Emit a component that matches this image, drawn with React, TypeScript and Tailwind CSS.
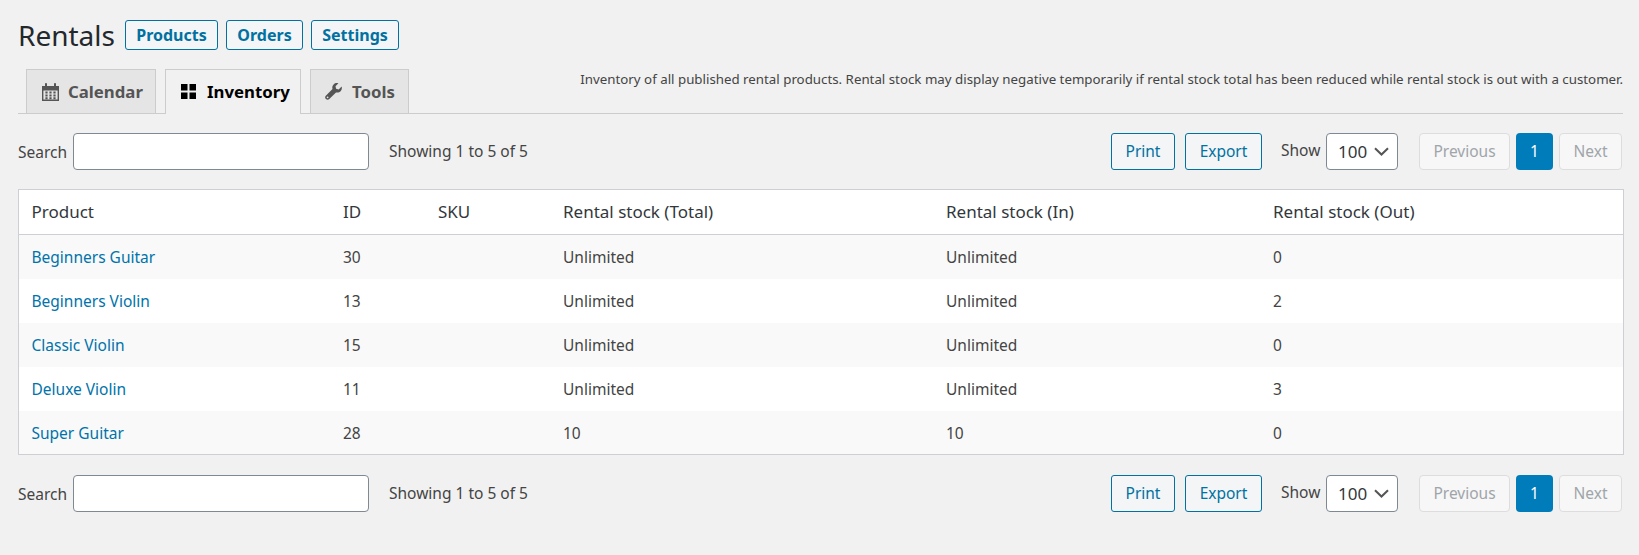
import React from "react";

const font = "font-['Noto_Sans','Open_Sans',sans-serif]";

const rows = [
  ["Beginners Guitar", "30", "", "Unlimited", "Unlimited", "0"],
  ["Beginners Violin", "13", "", "Unlimited", "Unlimited", "2"],
  ["Classic Violin", "15", "", "Unlimited", "Unlimited", "0"],
  ["Deluxe Violin", "11", "", "Unlimited", "Unlimited", "3"],
  ["Super Guitar", "28", "", "10", "10", "0"],
];

function CalendarIcon() {
  return (
    <svg width="17" height="18" viewBox="0 0 17 18" className="mr-[9px] shrink-0">
      <path fill="#555" fillRule="evenodd" d="M0 3h3V1.2C3 .5 3.4 0 4 0s1 .5 1 1.200V3h7V1.200C12 .5 12.400 0 13 0s1 .5 1 1.200V3h3v15H0V3zm1.400 4.500v9.100h14.200V7.500H1.400z" />
      <path fill="#555" d="M3.400 8.600h2.200v2H3.400zM7.400 8.600h2.200v2H7.400zM11.400 8.600h2.200v2h-2.200zM3.400 11.400h2.200v2H3.400zM7.400 11.400h2.200v2H7.400zM11.400 11.400h2.200v2h-2.200zM3.400 14.200h2.200v2H3.400zM7.400 14.200h2.200v2H7.400zM11.400 14.200h2.200v2h-2.200z" />
    </svg>
  );
}

function GridIcon() {
  return (
    <svg width="15" height="15" viewBox="0 0 15 15" className="mr-[11px] shrink-0">
      <path fill="#000" d="M0 0h6.500v6.500H0zM8.500 0H15v6.500H8.500zM0 8.500h6.500V15H0zM8.500 8.500H15V15H8.500z" />
    </svg>
  );
}

function WrenchIcon() {
  return (
    <svg width="17" height="17" viewBox="0 0 17 17" className="mr-[10px] shrink-0">
      <path fill="#555" d="M16.600 3.500c.6 1.700.2 3.500-1 4.800-1.200 1.200-3 1.600-4.600 1.100L4.300 16c-.9 1-2.400 1-3.300.1l-.1-.1c-1-.9-1-2.400-.1-3.300L7.500 6c-.5-1.600-.1-3.400 1.100-4.600C9.900.1 11.700-.3 13.400.3L10.500 3.200l.6 2.600 2.600.6 2.900-2.900z" />
      <circle cx="2.600" cy="14.300" r="0.900" fill="#e5e5e5" />
    </svg>
  );
}

function Toolbar() {
  return (
    <div className="flex items-center h-[37px] mr-[1px] text-[15.5px] text-[#444]">
      <span className="w-[55px] mt-[3px]">Search</span>
      <div className="w-[296px] h-[37px] bg-white border border-[#7e8993] rounded-[4px]" />
      <span className="ml-[20px]">Showing 1 to 5 of 5</span>
      <div className="ml-auto flex items-center">
        <button className="w-[64px] h-[37px] border border-[#0071a1] rounded-[3px] bg-[#f3f5f6] text-[#0071a1]">Print</button>
        <button className="ml-[10px] w-[77px] h-[37px] border border-[#0071a1] rounded-[3px] bg-[#f3f5f6] text-[#0071a1]">Export</button>
        <span className="ml-[19px] mt-[-1px] w-[45px]">Show</span>
        <div className="w-[72px] h-[37px] bg-white border border-[#7e8993] rounded-[4px] flex items-center pl-[11px] text-[17px] text-[#32373c]">
          <span>100</span>
          <svg width="15" height="9" viewBox="0 0 15 9" className="ml-[7px]">
            <path d="M1 1.200l6.500 6.300 6.500-6.300" fill="none" stroke="#555" strokeWidth="2" />
          </svg>
        </div>
        <div className="ml-[21px] w-[91px] h-[37px] border border-[#ddd] rounded-[4px] bg-[#f7f7f7] text-[#a0a5aa] flex items-center justify-center">Previous</div>
        <div className="ml-[6px] w-[37px] h-[37px] rounded-[4px] bg-[#007cba] text-white flex items-center justify-center">1</div>
        <div className="ml-[6px] w-[63px] h-[37px] border border-[#ddd] rounded-[4px] bg-[#f7f7f7] text-[#a0a5aa] flex items-center justify-center">Next</div>
      </div>
    </div>
  );
}

export default function App() {
  return (
    <div className={`min-h-[555px] bg-[#f1f1f1] pl-[18px] pr-[16px] ${font}`}>
      <div className="pt-[20px] flex items-start h-[69px]">
        <h1 className="text-[28px] leading-[30px] text-[#23282d] w-[107px]">Rentals</h1>
        <div className="flex gap-[8px] text-[16px] font-bold text-[#0071a1]">
          <a className="h-[30px] w-[93px] flex items-center justify-center border border-[#0071a1] rounded-[3px] bg-[#f3f5f6]">Products</a>
          <a className="h-[30px] w-[77px] flex items-center justify-center border border-[#0071a1] rounded-[3px] bg-[#f3f5f6]">Orders</a>
          <a className="h-[30px] w-[88px] flex items-center justify-center border border-[#0071a1] rounded-[3px] bg-[#f3f5f6]">Settings</a>
        </div>
      </div>
      <div className="flex border-b border-[#ccc] h-[45px] pl-[8px] items-end">
        <div className="flex gap-[9px] text-[16.800px] font-bold text-[#555] h-[44px] self-start">
          <div className="w-[130px] h-[44px] flex items-center pl-[15px] border border-[#ccc] border-b-0 bg-[#e5e5e5]"><CalendarIcon />Calendar</div>
          <div className="w-[136px] h-[45px] flex items-center pl-[15px] pb-px border border-[#ccc] border-b-0 bg-[#f1f1f1] text-black"><GridIcon />Inventory</div>
          <div className="w-[99px] h-[44px] flex items-center pl-[14px] border border-[#ccc] border-b-0 bg-[#e5e5e5]"><WrenchIcon />Tools</div>
        </div>
        <p className="ml-auto self-start mt-0 text-[13.300px] leading-[20px] text-[#444] whitespace-nowrap">
          Inventory of all published rental products. Rental stock may display negative temporarily if rental stock total has been reduced while rental stock is out with a customer.
        </p>
      </div>
      <div className="mt-[19px]">
        <Toolbar />
      </div>
      <table className="mt-[19px] w-[1606px] table-fixed border-collapse border border-[#ccd0d4] bg-white text-[15.5px] text-[#444] text-left">
        <colgroup>
          <col className="w-[312px]" />
          <col className="w-[95px]" />
          <col className="w-[125px]" />
          <col className="w-[383px]" />
          <col className="w-[327px]" />
          <col />
        </colgroup>
        <thead>
          <tr className="h-[45px] border-b border-[#ccd0d4] text-[#32373c]">
            {["Product", "ID", "SKU", "Rental stock (Total)", "Rental stock (In)", "Rental stock (Out)"].map((h) => (
              <th key={h} className="font-normal text-[17px] px-[12.5px]">{h}</th>
            ))}
          </tr>
        </thead>
        <tbody>
          {rows.map((r, i) => (
            <tr key={r[0]} className={`h-[44px] ${i % 2 === 0 ? "bg-[#f9f9f9]" : "bg-white"}`}>
              {r.map((c, j) => (
                <td key={j} className={`px-[12.5px] pt-[2px] ${j === 0 ? "text-[#0073aa]" : ""}`}>{c}</td>
              ))}
            </tr>
          ))}
        </tbody>
      </table>
      <div className="mt-[20px]">
        <Toolbar />
      </div>
    </div>
  );
}
